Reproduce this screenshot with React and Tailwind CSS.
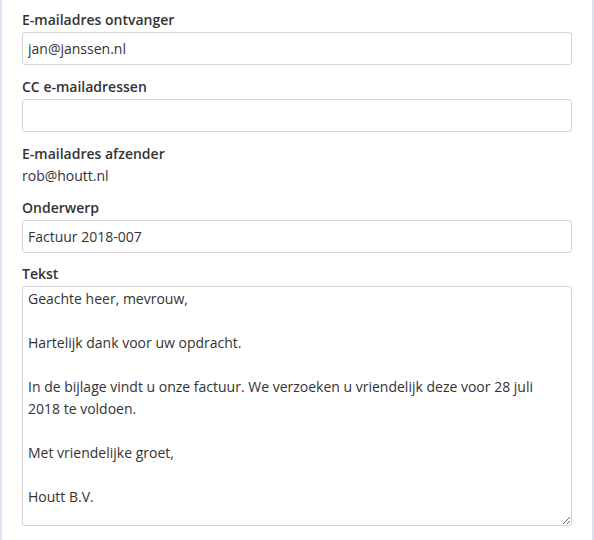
import { useState } from 'react';

const body =
  'Geachte heer, mevrouw,\n\nHartelijk dank voor uw opdracht.\n\nIn de bijlage vindt u onze factuur. We verzoeken u vriendelijk deze voor 28 juli 2018 te voldoen.\n\nMet vriendelijke groet,\n\nHoutt B.V.';

function Field({ label, className = 'mb-3', children }) {
  return (
    <div className={className}>
      <label className="block text-[14px] leading-5 font-semibold text-[#333] mb-[2px]">{label}</label>
      {children}
    </div>
  );
}

export default function App() {
  const [to, setTo] = useState('jan@janssen.nl');
  const [cc, setCc] = useState('');
  const [subject, setSubject] = useState('Factuur 2018-007');
  const [text, setText] = useState(body);

  const inputClass =
    'block w-full h-[33px] px-[5px] border border-[#d5d5d5] rounded-[3px] bg-white text-[14px] text-[#333] outline-none';

  return (
    <div
      className="min-h-[540px] w-[594px] bg-white border-l-2 border-r-2 border-[#e0e1f0] px-5 pt-[10px]"
      style={{ fontFamily: '"Open Sans", "Liberation Sans", sans-serif' }}
    >
      <Field label="E-mailadres ontvanger">
        <input className={inputClass} value={to} onChange={(e) => setTo(e.target.value)} />
      </Field>

      <Field label="CC e-mailadressen">
        <input className={inputClass} value={cc} onChange={(e) => setCc(e.target.value)} />
      </Field>

      <div className="mb-3">
        <div className="text-[14px] leading-5 font-semibold text-[#333]">E-mailadres afzender</div>
        <div className="mt-[2px] text-[14px] leading-5 text-[#333]">rob@houtt.nl</div>
      </div>

      <Field label="Onderwerp" className="mb-[11px]">
        <input className={inputClass} value={subject} onChange={(e) => setSubject(e.target.value)} />
      </Field>

      <Field label="Tekst">
        <textarea
          className="block w-full h-[240px] px-[5px] pt-[1px] pb-[3px] border border-[#d5d5d5] rounded-[3px] bg-white text-[14px] leading-[22px] text-[#333] outline-none"
          value={text}
          onChange={(e) => setText(e.target.value)}
        />
      </Field>
    </div>
  );
}
